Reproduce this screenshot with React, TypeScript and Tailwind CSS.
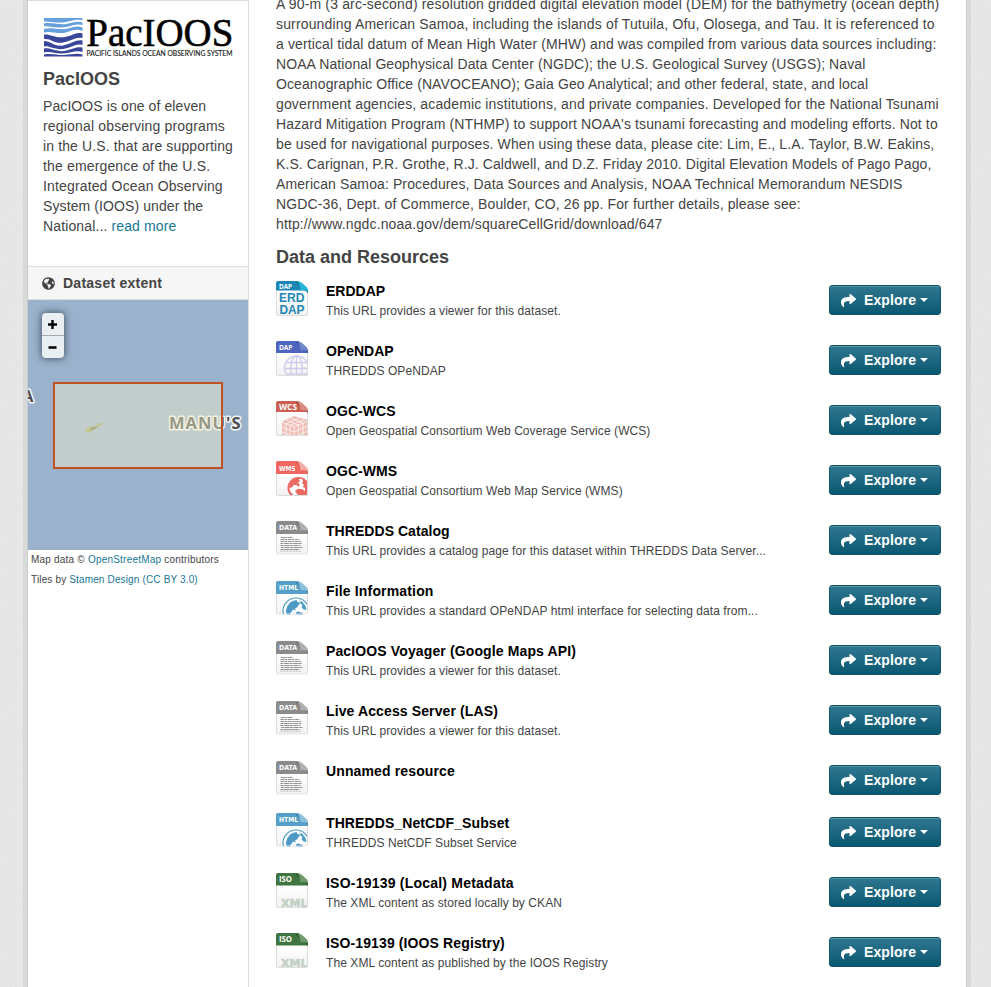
import type { ReactNode } from "react";
import { FaGlobeAmericas, FaShare } from "react-icons/fa";

const ARIAL = "font-['Liberation_Sans',Arial,sans-serif]";

const notes: { text: string; className: string }[] = [
  { text: "A 90-m (3 arc-second) resolution gridded digital elevation model (DEM) for the bathymetry (ocean depth)", className: "tracking-[.155px]" },
  { text: "surrounding American Samoa, including the islands of Tutuila, Ofu, Olosega, and Tau. It is referenced to", className: "tracking-[.155px]" },
  { text: "a vertical tidal datum of Mean High Water (MHW) and was compiled from various data sources including:", className: "tracking-[.12px]" },
  { text: "NOAA National Geophysical Data Center (NGDC); the U.S. Geological Survey (USGS); Naval", className: "tracking-[.095px]" },
  { text: "Oceanographic Office (NAVOCEANO); Gaia Geo Analytical; and other federal, state, and local", className: "tracking-[.1px]" },
  { text: "government agencies, academic institutions, and private companies. Developed for the National Tsunami", className: "tracking-[.13px]" },
  { text: "Hazard Mitigation Program (NTHMP) to support NOAA's tsunami forecasting and modeling efforts. Not to", className: "tracking-[.12px]" },
  { text: "be used for navigational purposes. When using these data, please cite: Lim, E., L.A. Taylor, B.W. Eakins,", className: "tracking-[.105px]" },
  { text: "K.S. Carignan, P.R. Grothe, R.J. Caldwell, and D.Z. Friday 2010. Digital Elevation Models of Pago Pago,", className: "tracking-[.095px]" },
  { text: "American Samoa: Procedures, Data Sources and Analysis, NOAA Technical Memorandum NESDIS", className: "tracking-[.11px]" },
  { text: "NGDC-36, Dept. of Commerce, Boulder, CO, 26 pp. For further details, please see:", className: "tracking-[.13px]" },
  { text: "http://www.ngdc.noaa.gov/dem/squareCellGrid/download/647", className: "tracking-[.12px]" },
];

const about: { text: string; className: string }[] = [
  { text: "PacIOOS is one of eleven", className: "tracking-[.09px]" },
  { text: "regional observing programs", className: "tracking-[.17px]" },
  { text: "in the U.S. that are supporting", className: "tracking-[.13px]" },
  { text: "the emergence of the U.S.", className: "tracking-[.15px]" },
  { text: "Integrated Ocean Observing", className: "tracking-[.15px]" },
  { text: "System (IOOS) under the", className: "tracking-[.1px]" },
];

type Kind = "erddap" | "dap" | "wcs" | "wms" | "data" | "html" | "iso";

const resources: { kind: Kind; title: string; text?: string; track: string }[] = [
  { kind: "erddap", title: "ERDDAP", text: "This URL provides a viewer for this dataset.", track: "tracking-normal" },
  { kind: "dap", title: "OPeNDAP", text: "THREDDS OPeNDAP", track: "tracking-normal" },
  { kind: "wcs", title: "OGC-WCS", text: "Open Geospatial Consortium Web Coverage Service (WCS)", track: "tracking-[.05px]" },
  { kind: "wms", title: "OGC-WMS", text: "Open Geospatial Consortium Web Map Service (WMS)", track: "tracking-[.05px]" },
  { kind: "data", title: "THREDDS Catalog", text: "This URL provides a catalog page for this dataset within THREDDS Data Server...", track: "tracking-[.05px]" },
  { kind: "html", title: "File Information", text: "This URL provides a standard OPeNDAP html interface for selecting data from...", track: "tracking-[.16px]" },
  { kind: "data", title: "PacIOOS Voyager (Google Maps API)", text: "This URL provides a viewer for this dataset.", track: "tracking-[.125px]" },
  { kind: "data", title: "Live Access Server (LAS)", text: "This URL provides a viewer for this dataset.", track: "tracking-[.12px]" },
  { kind: "data", title: "Unnamed resource", track: "tracking-[.13px]" },
  { kind: "html", title: "THREDDS_NetCDF_Subset", text: "THREDDS NetCDF Subset Service", track: "tracking-[.1px]" },
  { kind: "iso", title: "ISO-19139 (Local) Metadata", text: "The XML content as stored locally by CKAN", track: "tracking-[.22px]" },
  { kind: "iso", title: "ISO-19139 (IOOS Registry)", text: "The XML content as published by the IOOS Registry", track: "tracking-[.12px]" },
];

type FileStyle = {
  label: string;
  top: string;
  dark: string;
  light: string;
  size: number;
  labelWidth: number;
  baseline: number;
  bottom: number;
  head: number;
  font: string;
};

const styles: Record<Kind, FileStyle> = {
  erddap: { label: "DAP", top: "#1c87b4", dark: "#0f6a93", light: "#22b4d4", size: 6.4, labelWidth: 13, baseline: 7.6, bottom: 35, head: 9.5, font: "Open Sans" },
  dap: { label: "DAP", top: "#4f66c0", dark: "#3a4b99", light: "#7187cc", size: 6.8, labelWidth: 13.5, baseline: 9, bottom: 35, head: 12, font: "Open Sans" },
  wcs: { label: "WCS", top: "#cc5f52", dark: "#9f473e", light: "#d98d82", size: 8, labelWidth: 18, baseline: 9.2, bottom: 35, head: 11, font: "Open Sans" },
  wms: { label: "WMS", top: "#ef675f", dark: "#d25a53", light: "#f3aba5", size: 6.8, labelWidth: 16.5, baseline: 9.5, bottom: 35, head: 13, font: "DejaVu Sans" },
  data: { label: "DATA", top: "#8b8b8b", dark: "#6f6f6f", light: "#b0b0b0", size: 7, labelWidth: 18, baseline: 9.2, bottom: 33.5, head: 13, font: "DejaVu Sans" },
  html: { label: "HTML", top: "#559fc8", dark: "#3b7da5", light: "#8dc2de", size: 6.8, labelWidth: 19, baseline: 9.3, bottom: 33.5, head: 13, font: "DejaVu Sans" },
  iso: { label: "ISO", top: "#3f7540", dark: "#26512b", light: "#6e9a6c", size: 8, labelWidth: 13, baseline: 9, bottom: 35, head: 12.5, font: "Open Sans" },
};

function FileArt({ kind }: { kind: Kind }) {
  switch (kind) {
    case "erddap":
      return (
        <g fill="#1c87b4" fontFamily="Liberation Sans, sans-serif" fontSize="12" fontWeight="700">
          <text x="3" y="21" textLength="25.5" lengthAdjust="spacingAndGlyphs">ERD</text>
          <text x="3.5" y="33" textLength="25" lengthAdjust="spacingAndGlyphs">DAP</text>
        </g>
      );
    case "dap":
      return (
        <g fill="none" stroke="#cfcbea" strokeWidth="1.3">
          <circle cx="20.5" cy="27" r="12" />
          <ellipse cx="20.5" cy="27" rx="5.8" ry="12" />
          <path d="M20.5 15v20M10 21.5h21M8.5 27.500h24M10 33h21" />
        </g>
      );
    case "wcs":
      return (
        <g>
          <path d="M6 20.500l12-5.500 14 4v16H6z" fill="#efbfb7" />
          <g fill="none" stroke="#fff" strokeWidth="0.7">
            <path d="M6 21l12 5 14-6M18 26v9M10 19l12 5M14 17l13 5M10 23l13-6M14 24.500l14-6" />
            <path d="M10 22.500v12.500M14 24v11M22.500 24v11M27 22v13M6 26l12 5 14-6M6 31l12 5 14-6" />
          </g>
        </g>
      );
    case "wms":
      return (
        <g>
          <circle cx="22.500" cy="27" r="11" fill="#ea6b63" />
          <path d="M13.500 27l3-1 1-2 3 0 2 2 0 2-3 1 0 2 2 2-1 3-3-2-3-3z" fill="#fff" />
          <path d="M23 18l3 0 1 2-1 2 2 2-1 2 2 1 0 3-3-2-3 0-1-2 2-2-2-2 2-2z" fill="#fff" />
        </g>
      );
    case "html":
      return (
        <g>
          <circle cx="20" cy="30" r="13" fill="#fff" stroke="#4c9bc7" strokeWidth="1.2" />
          <path d="M10 31c0-5 3-9 6.500-11l4-1 1 2 3 1-2 2-1 2-2.500 1.500 1 2-3-1-1 2-2 1.500 1 4h-3z" fill="#4c9bc7" />
          <path d="M23.500 19.500l3 1.500 3 4 1 4-3-.5-2-2.500 1-2-2-1.500z" fill="#4c9bc7" />
          <path d="M19.500 31.500l3-1 4 1.500 0 3h-5z" fill="#4c9bc7" />
        </g>
      );
    case "data":
      return (
        <g stroke="#777" strokeWidth="0.8">
          <path d="M5 16.500h12M4.500 18.500h19M4.500 20.500h21" strokeDasharray="4 .5 2 .6" />
          <path d="M4.500 22.500h21M4.500 24.500h20M5 26.500h22M4.500 28.500h19" strokeDasharray="3 .6 5 .5" />
          <path d="M4.500 30.200h21" strokeDasharray="2 1" opacity=".6" />
        </g>
      );
    case "iso":
      return (
        <text x="5" y="34" textLength="26.5" lengthAdjust="spacingAndGlyphs" fill="#c2d1c6" stroke="#c2d1c6" strokeWidth=".5" fontFamily="DejaVu Sans, sans-serif" fontSize="11" fontWeight="700">
          XML
        </text>
      );
  }
}

function FileIcon({ kind }: { kind: Kind }) {
  const s = styles[kind];
  const clip = `sheet-${kind}`;
  return (
    <svg width="32" height="36" viewBox="0 0 32 36" className="block shrink-0">
      <defs>
        <clipPath id={clip}>
          <path d={`M2 0H22L32 9V${s.bottom - 1.5}Q32 ${s.bottom} 30 ${s.bottom}H2Q0 ${s.bottom} 0 ${s.bottom - 1.5}V2Q0 0 2 0z`} />
        </clipPath>
        <linearGradient id={`paper-${kind}`} x1="0" y1="0" x2="0" y2="1">
          <stop offset=".4" stopColor="#fff" />
          <stop offset="1" stopColor="#f1f1f1" />
        </linearGradient>
      </defs>
      <g clipPath={`url(#${clip})`}>
        <rect width="32" height={s.bottom} fill={`url(#paper-${kind})`} />
        <FileArt kind={kind} />
        <path d={`M.5 10V${s.bottom - 2}Q.5 ${s.bottom - 0.5} 2 ${s.bottom - 0.5}H30Q31.500 ${s.bottom - 0.5} 31.500 ${s.bottom - 2}V10`} fill="none" stroke="#ddd" />
        <rect width="32" height={s.head} fill={s.top} />
        <path d="M20 2L32 12V9L22 0z" fill={s.dark} />
      </g>
      <path d="M21 0Q24 0 26 2L31 6.500Q32 8 32 10.500Q28 8 24.500 9.500Q24.500 4 21 0z" fill={s.light} />
      <text x="3" y={s.baseline} fill="#fff" fontFamily={`${s.font}, sans-serif`} fontSize={s.size} fontWeight="700" textLength={s.labelWidth} lengthAdjust="spacingAndGlyphs">
        {s.label}
      </text>
    </svg>
  );
}

function Logo() {
  return (
    <svg width="190" height="40" viewBox="0 0 190 40" className="block overflow-visible">
      <g fill="#65a0dc">
        <path d="M1 1H39.500V3C30 1.500 25 6 14 5.500C8 5.200 5 4 1 4.500z" />
        <path d="M1 6.500C8 5 15 8 23 7C30 6 34 3.500 39.500 5.500V8C33 6 27 10 18 10.500C10 11 6 8.500 1 9.500z" />
        <path d="M1 12C9 10 16 13.500 25 11.500C31 10 34 8.500 39.500 10.500V14C34 11.500 29 13.500 23 15.500C15 17.500 7 13.500 1 15.500z" />
      </g>
      <g fill="#3a4699">
        <path d="M1 17.500C8 17 13 21.500 22 20C29 19 33 14.500 39.500 16.500V21C33 19.500 28 24 20 25.500C11 27 8 21 1 22z" />
        <path d="M1 24C8 24 11 30 20 28.500C28 27 33 22.500 39.500 23.500V28C33 26 28 31 20 32C11 33 7 28.500 1 29.500z" />
        <path d="M1 31.500C8 30.500 13 35 21 34C29 32.500 33 29 39.500 30.500V35C33 33 28 36 20 36.500C12 37 8 34 1 35.500z" />
        <path d="M1 37.500C9 36 15 38.500 21 38C29 37.500 34 36 39.500 37.500V39.500H1z" />
      </g>
      <text x="43.300" y="29" textLength="147" lengthAdjust="spacingAndGlyphs" fill="#000" stroke="#000" strokeWidth=".6" fontFamily="Liberation Serif, serif" fontSize="41">
        PacIOOS
      </text>
      <text x="43.500" y="38.700" textLength="146" lengthAdjust="spacingAndGlyphs" fill="#111" stroke="#111" strokeWidth=".1" fontFamily="Lato, sans-serif" fontSize="7">
        PACIFIC ISLANDS OCEAN OBSERVING SYSTEM
      </text>
    </svg>
  );
}

function Gutter() {
  return (
    <svg className="block h-full w-full bg-[#e4e4e4]">
      <filter id="grain" x="0" y="0" width="100%" height="100%" colorInterpolationFilters="sRGB">
        <feTurbulence type="fractalNoise" baseFrequency=".6" numOctaves="2" />
        <feColorMatrix values="0 0 0 0 1  0 0 0 0 1  0 0 0 0 1  1.600 0 0 0 -.5" />
      </filter>
      <rect width="100%" height="100%" filter="url(#grain)" opacity=".25" />
    </svg>
  );
}

function ExtentMap() {
  return (
    <div className="relative h-[250px] bg-[#9ab2cc]">
      <svg width="220" height="250" className="block">
        <g fontFamily="Open Sans, sans-serif" fontWeight="700" fill="#4c4f52" stroke="#f4f5f4" strokeWidth="3" paintOrder="stroke" strokeLinejoin="round">
          <text x="-6" y="101.500" fontSize="16.500">A</text>
          <text x="141" y="129" fontSize="16.500" textLength="71.500">MANU'S</text>
        </g>
        <path d="M56 131l5-4 6-1 5-3 4 0-5 3.500-4 2-4 4-4-1z" fill="#96a55e" />
        <path d="M61 129l6-2 3 0-5 3z" fill="#5e724a" />
        <rect x="26" y="83" width="168" height="85" fill="#f3f0ca" fillOpacity=".45" stroke="#bf5224" strokeWidth="2" />
      </svg>
      <div className="absolute top-[13px] left-[14px] w-[22px] overflow-hidden rounded-[4px] bg-[#e9eef3] shadow-[0_0_7px_1px_rgba(50,60,70,.75)]">
        <ZoomButton>
          <path d="M6 11.500h9M10.500 7v9" />
        </ZoomButton>
        <div className="h-px bg-[#aaa]" />
        <ZoomButton>
          <path d="M6.500 11.500h8" />
        </ZoomButton>
      </div>
    </div>
  );
}

function ZoomButton({ children }: { children: ReactNode }) {
  return (
    <button className="block h-[22px] w-[22px]">
      <svg width="22" height="22" stroke="#000" strokeWidth="2.400" className="block">
        {children}
      </svg>
    </button>
  );
}

function Sidebar() {
  return (
    <aside className="flex w-[221px] shrink-0 flex-col border-t border-r border-[#ddd]">
      <div className="h-[265px] pt-4 pl-[15px]">
        <Logo />
        <h1 className="mt-3 text-[18px] leading-[20px] font-bold whitespace-nowrap">PacIOOS</h1>
        <p className="mt-[7px] text-[14px] leading-[20px] whitespace-nowrap">
          {about.map((line) => (
            <span key={line.text} className={`block ${line.className}`}>{line.text}</span>
          ))}
          <span className="block tracking-[.13px]">
            National... <a className="text-[#187794]">read more</a>
          </span>
        </p>
      </div>
      <h2 className="flex h-[34px] items-center border-y border-[#ddd] bg-[#f6f6f6] pl-[14px] text-[14px] font-bold tracking-[.25px]">
        <FaGlobeAmericas className="mr-2 size-[13px]" />
        Dataset extent
      </h2>
      <ExtentMap />
      <div className="pl-[3px] text-[10px] leading-[20px] whitespace-nowrap">
        <p className="tracking-[.21px]">
          Map data © <a className="text-[#187794]">OpenStreetMap</a> contributors
        </p>
        <p className="tracking-[.15px]">
          Tiles by <a className="text-[#187794]">Stamen Design</a> <a className="text-[#187794]">(CC BY 3.0)</a>
        </p>
      </div>
    </aside>
  );
}

function ExploreButton() {
  return (
    <button className="mt-1 flex h-[30px] w-[112px] shrink-0 items-center rounded-[3px] border border-[#0f5466] bg-linear-to-b from-[#2f7790] to-[#085871] pl-[11px] text-[14px] font-bold text-white shadow-[inset_0_1px_0_rgba(255,255,255,.2)]">
      <FaShare className="mr-2 size-[15px]" />
      <span className="tracking-[.1px]">Explore</span>
      <span className="ml-1 border-x-4 border-t-4 border-x-transparent border-t-white" />
    </button>
  );
}

export default function App() {
  return (
    <div className={`flex h-[987px] w-[991px] overflow-hidden bg-[#e7e7e7] text-[#444] ${ARIAL}`}>
      <div className="w-[23px] shrink-0"><Gutter /></div>
      <div className="w-1 shrink-0 bg-[#d9d9d9]" />
      <div className="flex w-[940px] shrink-0 border-x border-[#ccc] bg-white">
        <Sidebar />
        <main className="w-[717px] pl-[27px]">
          <div className="-mt-[6px] text-[14px] leading-[20px] whitespace-nowrap">
            {notes.map((line) => (
              <p key={line.text} className={line.className}>{line.text}</p>
            ))}
          </div>
          <h2 className="mt-[13px] text-[18px] leading-[20px] font-bold">Data and Resources</h2>
          <ul className="mt-[14px]">
            {resources.map((r) => (
              <li key={r.title} className={`flex w-[665px] items-start ${r.text ? "h-[60px]" : "h-[52px]"}`}>
                <FileIcon kind={r.kind} />
                <div className="ml-[18px] grow whitespace-nowrap">
                  <a className={`block text-[14px] leading-[20px] font-bold text-black ${r.track}`}>{r.title}</a>
                  {r.text && <p className="text-[12px] leading-[20px] tracking-[.073px]">{r.text}</p>}
                </div>
                <ExploreButton />
              </li>
            ))}
          </ul>
        </main>
      </div>
      <div className="w-1 shrink-0 bg-[#d9d9d9]" />
      <div className="w-[20px] shrink-0"><Gutter /></div>
    </div>
  );
}
